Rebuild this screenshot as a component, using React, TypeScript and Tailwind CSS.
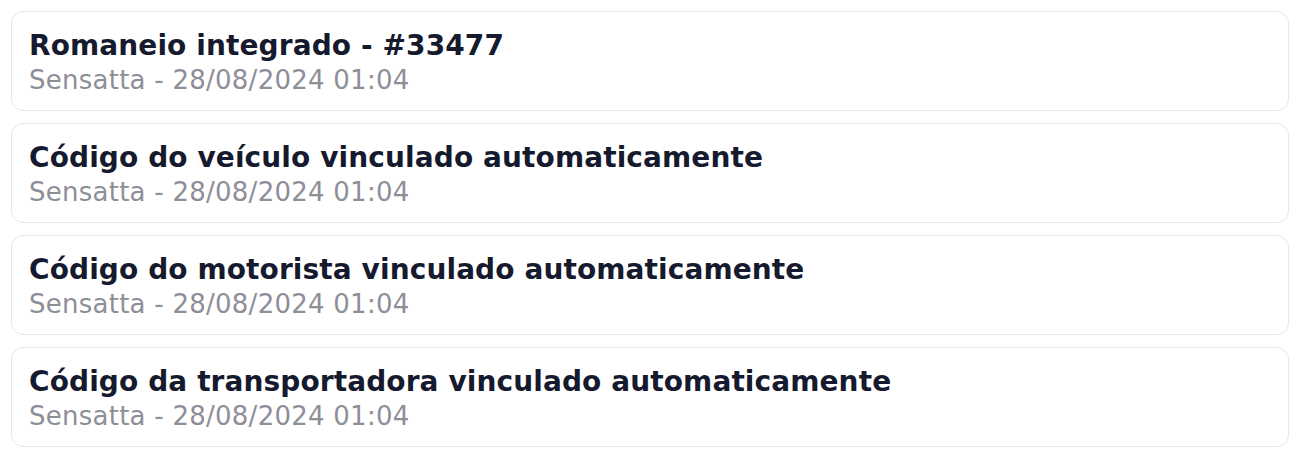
const items = [
  "Romaneio integrado - #33477",
  "Código do veículo vinculado automaticamente",
  "Código do motorista vinculado automaticamente",
  "Código da transportadora vinculado automaticamente",
];

export default function App() {
  return (
    <div className="flex min-h-screen flex-col gap-3 bg-white p-[11px] font-['DejaVu_Sans',sans-serif]">
      {items.map((title) => (
        <div
          key={title}
          className="flex h-[100px] flex-col rounded-xl border border-[#e6e6e8] bg-white px-[17px] pt-[18px]"
        >
          <h3 className="text-[28px] font-bold leading-[32px] tracking-[0.1px] text-[#161a2e]">
            {title}
          </h3>
          <p className="mt-[2px] text-[26px] leading-[32px] tracking-[0.25px] text-[#8e8e98]">
            Sensatta - 28/08/2024 01:04
          </p>
        </div>
      ))}
    </div>
  );
}
